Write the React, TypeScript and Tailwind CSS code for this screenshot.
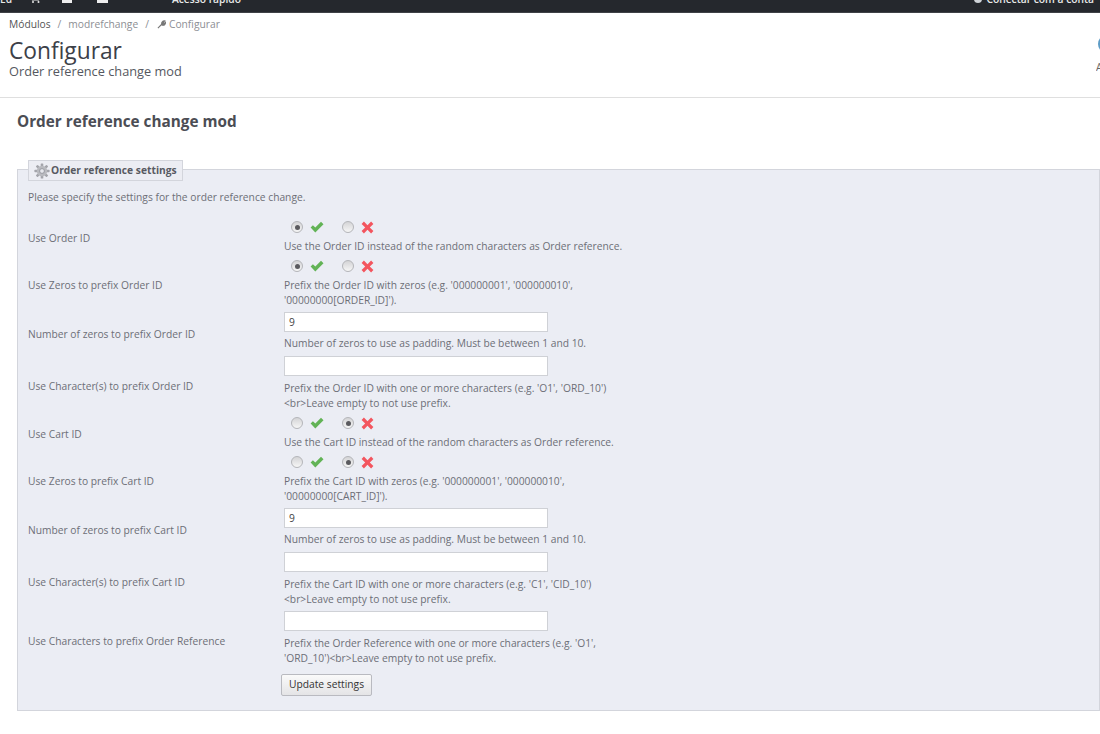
import React from "react";

function Gear() {
  return (
    <svg width="16" height="16" viewBox="0 0 16 16" className="shrink-0">
      <g fill="#a3a4aa">
        {[0, 45, 90, 135, 180, 225, 270, 315].map((a) => (
          <rect key={a} x="6.7" y="0.4" width="2.6" height="3.6" rx="0.7" transform={`rotate(${a} 8 8)`} />
        ))}
      </g>
      <circle cx="8" cy="8" r="5.2" fill="#b9babf" />
      <circle cx="8" cy="8" r="2.4" fill="#e6e7ec" stroke="#8b8d94" strokeWidth="0.8" />
    </svg>
  );
}

function Check() {
  return (
    <svg width="14" height="12" viewBox="0 0 14 12" className="block">
      <path d="M0.6 6.6 L2.9 4.3 L5.3 6.6 L11 0.8 L13.5 3.2 L5.3 11.4 Z" fill="#62b356" />
    </svg>
  );
}

function Cross() {
  return (
    <svg width="13" height="13" viewBox="0 0 13 13" className="block">
      <path d="M0.6 2.9 L2.9 0.6 L6.5 4.2 L10.1 0.6 L12.4 2.9 L8.8 6.5 L12.4 10.1 L10.1 12.4 L6.5 8.8 L2.9 12.4 L0.6 10.1 L4.2 6.5 Z" fill="#f3555e" />
    </svg>
  );
}

function Radio({ on }: { on: boolean }) {
  return (
    <span className="flex h-[12px] w-[12px] items-center justify-center rounded-full border border-[#b4b5b9] bg-gradient-to-b from-[#d4d4d6] to-[#f6f6f6]">
      {on && <span className="h-[5px] w-[5px] rounded-full bg-[#5a5a5e]" />}
    </span>
  );
}

function Toggle({ yes }: { yes: boolean }) {
  return (
    <div className="ml-[7px] flex h-[18px] items-center">
      <Radio on={yes} />
      <span className="ml-[7px] w-[14px]">
        <Check />
      </span>
      <span className="ml-[18px]">
        <Radio on={!yes} />
      </span>
      <span className="ml-[7px] flex">
        <Cross />
      </span>
    </div>
  );
}

function Row({
  label,
  children,
  className,
  labelClass = "pt-[2px]",
}: {
  label: string;
  children: React.ReactNode;
  className: string;
  labelClass?: string;
}) {
  return (
    <div className={`flex items-center ${className}`}>
      <div className={`w-[256px] shrink-0 text-[10.25px] text-[#6d6f77] ${labelClass}`}>{label}</div>
      <div className="w-[345px] shrink-0 self-start">{children}</div>
    </div>
  );
}

function Hint({ children, className = "mt-[3px]" }: { children: React.ReactNode; className?: string }) {
  return <p className={`text-[10.25px] leading-[15px] text-[#6d6f77] ${className}`}>{children}</p>;
}

function Field({ value }: { value?: string }) {
  return (
    <div className="flex h-[20px] w-[264px] items-center border border-[#cfd1d6] bg-white px-[4px] pt-[1px] text-[10.25px] text-[#444]">
      {value}
    </div>
  );
}

export default function App() {
  return (
    <div className="h-[734px] w-[1100px] overflow-hidden bg-white font-['Open_Sans',sans-serif]">
      <div className="flex h-[13px] items-end justify-between overflow-hidden border-b border-[#3f4247] bg-[#25282d] pr-[6px] pb-[6px] text-[10.25px] font-semibold text-[#e8e8e8]">
        <div className="flex items-end">
          <span className="w-[30px] leading-[14px]">Ed</span>
          <svg width="11" height="14" viewBox="0 0 11 14" className="mb-[3px] w-[32px]" preserveAspectRatio="xMinYMid meet">
            <path d="M0 4 H10 L9 11.5 H2 Z" fill="#e8e8e8" />
            <circle cx="3" cy="13" r="1" fill="#e8e8e8" />
            <circle cx="8.5" cy="13" r="1" fill="#e8e8e8" />
          </svg>
          <span className="mb-[3px] h-[14px] w-[10px] bg-[#eeeeee]" />
          <span className="mb-[3px] ml-[25px] h-[14px] w-[11px] bg-[#eeeeee]" />
          <span className="ml-[64px] leading-[14px]">Acesso rápido</span>
        </div>
        <div className="flex items-end">
          <span className="mr-[4px] mb-[3px] h-[10px] w-[8px] rounded-full bg-[#cfd3d8]" />
          <span className="whitespace-nowrap leading-[14px]">Conectar com a conta</span>
        </div>
      </div>

      <div className="flex h-[85px] justify-between border-b border-[#dfdfdf]">
        <div className="pl-[9px] pt-[4px]">
          <div className="flex items-center text-[10.25px] leading-[14px] text-[#8c8e94]">
            <span className="text-[#555]">Módulos</span>
            <span className="mx-[7px]">/</span>
            <span>modrefchange</span>
            <span className="mx-[7px]">/</span>
            <svg width="9" height="9" viewBox="0 0 10 10" className="ml-[1px] mr-[3px]">
              <path d="M1 9 L5 5 M5.5 5.5 C4.5 3 6 1 8.5 1 L7 3 L8 4 L9.5 2.5 C9.5 5 8 6.5 5.5 5.5 Z" fill="#777" stroke="#777" strokeWidth="1.2" />
            </svg>
            <span>Configurar</span>
          </div>
          <h1 className="mt-[8px] text-[22.75px] leading-[24px] font-normal text-[#3c4048]">Configurar</h1>
          <p className="mt-[2px] text-[12.75px] leading-[12px] text-[#555860]">Order reference change mod</p>
        </div>
        <div className="w-[4px] overflow-hidden pt-[22px]">
          <div className="ml-[2px] h-[18px] w-[18px] rounded-full border-2 border-[#5d9cc6]" />
          <div className="mt-[7px] text-[10.25px] leading-[14px] text-[#666]">A</div>
        </div>
      </div>

      <div className="pl-[17px]">
        <h2 className="mt-[13px] text-[15.3px] leading-[20px] font-bold text-[#4b4d54]">Order reference change mod</h2>

        <div className="relative mt-[38px] h-[542px] border border-[#d3d5dc] bg-[#ebedf4] pl-[10px]">
          <div className="absolute top-[-10px] left-[10px] flex h-[21px] w-[155px] items-center border border-[#d3d5dc] bg-[#ecedf3] pl-[5px] text-[10.25px] font-bold text-[#585a62]">
            <Gear />
            <span className="ml-[1px]">Order reference settings</span>
          </div>

          <p className="pt-[20px] text-[10.25px] leading-[15px] text-[#6d6f77]">Please specify the settings for the order reference change.</p>

          <div className="mt-[13px] flex flex-col">
            <Row label="Use Order ID" className="h-[39px]">
              <Toggle yes />
              <Hint>Use the Order ID instead of the random characters as Order reference.</Hint>
            </Row>
            <Row label="Use Zeros to prefix Order ID" className="h-[55px]">
              <Toggle yes />
              <Hint>
                Prefix the Order ID with zeros (e.g. '000000001', '000000010',
                <br />
                '00000000[ORDER_ID]').
              </Hint>
            </Row>
            <Row label="Number of zeros to prefix Order ID" className="h-[44px]">
              <Field value="9" />
              <Hint className="mt-[4px]">Number of zeros to use as padding. Must be between 1 and 10.</Hint>
            </Row>
            <Row label="Use Character(s) to prefix Order ID" className="h-[58px]" labelClass="pt-[4px]">
              <Field />
              <Hint className="mt-[5px]">
                Prefix the Order ID with one or more characters (e.g. 'O1', 'ORD_10')
                <br />
                &lt;br&gt;Leave empty to not use prefix.
              </Hint>
            </Row>
            <Row label="Use Cart ID" className="h-[39px]">
              <Toggle yes={false} />
              <Hint>Use the Cart ID instead of the random characters as Order reference.</Hint>
            </Row>
            <Row label="Use Zeros to prefix Cart ID" className="h-[55px]">
              <Toggle yes={false} />
              <Hint>
                Prefix the Cart ID with zeros (e.g. '000000001', '000000010',
                <br />
                '00000000[CART_ID]').
              </Hint>
            </Row>
            <Row label="Number of zeros to prefix Cart ID" className="h-[44px]">
              <Field value="9" />
              <Hint className="mt-[4px]">Number of zeros to use as padding. Must be between 1 and 10.</Hint>
            </Row>
            <Row label="Use Character(s) to prefix Cart ID" className="h-[59px]">
              <Field />
              <Hint className="mt-[5px]">
                Prefix the Cart ID with one or more characters (e.g. 'C1', 'CID_10')
                <br />
                &lt;br&gt;Leave empty to not use prefix.
              </Hint>
            </Row>
            <Row label="Use Characters to prefix Order Reference" className="h-[60px]">
              <Field />
              <Hint className="mt-[5px]">
                Prefix the Order Reference with one or more characters (e.g. 'O1',
                <br />
                'ORD_10')&lt;br&gt;Leave empty to not use prefix.
              </Hint>
            </Row>
          </div>

          <button className="mt-[3px] ml-[253px] flex h-[22px] w-[91px] items-center justify-center rounded-[2px] border border-[#b9bac0] bg-gradient-to-b from-[#fafafa] to-[#e4e4e6] text-[10.25px] text-[#333]">
            Update settings
          </button>
        </div>
      </div>
    </div>
  );
}
